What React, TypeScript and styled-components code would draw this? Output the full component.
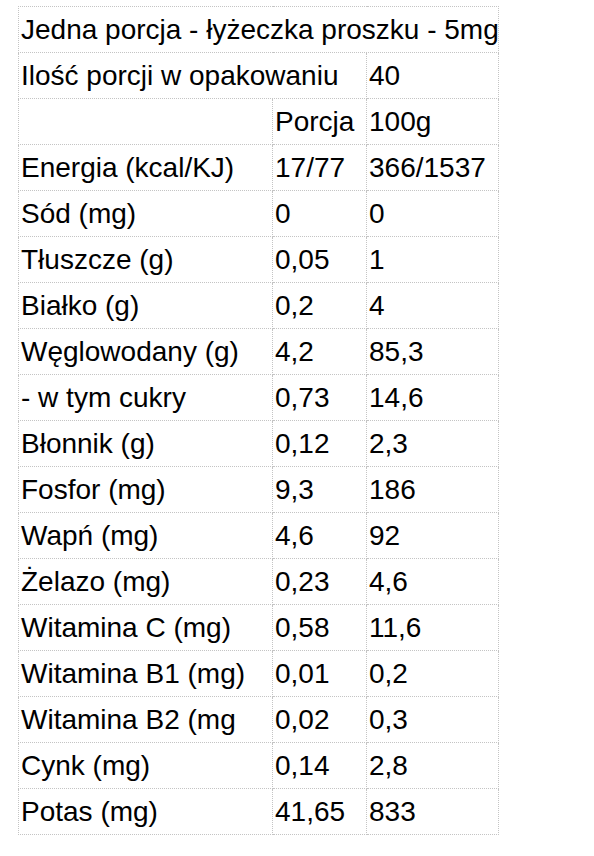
import styled, { createGlobalStyle } from "styled-components";

const Global = createGlobalStyle`
    body {
        margin: 0;
        background: #ffffff;
    }
`;

const Page = styled.div`
    padding: 6px 0 0 18px;
`;

const Table = styled.table`
    border-collapse: collapse;
    table-layout: fixed;
    width: 480px;
    font-family: "Liberation Sans", Arial, Helvetica, sans-serif;
    font-size: 28px;
    color: #000000;
`;

const Cell = styled.td`
    border: 1px dotted #c4c4c4;
    height: 45px;
    padding: 0 0 0 2px;
    white-space: nowrap;
    overflow: visible;
    vertical-align: middle;
`;

type Row = [string, string, string];

const rows: Row[] = [
    ["", "Porcja", "100g"],
    ["Energia (kcal/KJ)", "17/77", "366/1537"],
    ["Sód (mg)", "0", "0"],
    ["Tłuszcze (g)", "0,05", "1"],
    ["Białko (g)", "0,2", "4"],
    ["Węglowodany (g)", "4,2", "85,3"],
    ["- w tym cukry", "0,73", "14,6"],
    ["Błonnik (g)", "0,12", "2,3"],
    ["Fosfor (mg)", "9,3", "186"],
    ["Wapń (mg)", "4,6", "92"],
    ["Żelazo (mg)", "0,23", "4,6"],
    ["Witamina C (mg)", "0,58", "11,6"],
    ["Witamina B1 (mg)", "0,01", "0,2"],
    ["Witamina B2 (mg", "0,02", "0,3"],
    ["Cynk (mg)", "0,14", "2,8"],
    ["Potas (mg)", "41,65", "833"],
];

export default function App() {
    return (
        <>
            <Global />
            <Page>
                <Table>
                    <colgroup>
                        <col style={{ width: 254 }} />
                        <col style={{ width: 94 }} />
                        <col style={{ width: 132 }} />
                    </colgroup>
                    <tbody>
                        <tr>
                            <Cell colSpan={3}>Jedna porcja - łyżeczka proszku - 5mg</Cell>
                        </tr>
                        <tr>
                            <Cell colSpan={2}>Ilość porcji w opakowaniu</Cell>
                            <Cell>40</Cell>
                        </tr>
                        {rows.map((r, i) => (
                            <tr key={i}>
                                <Cell>{r[0]}</Cell>
                                <Cell>{r[1]}</Cell>
                                <Cell>{r[2]}</Cell>
                            </tr>
                        ))}
                    </tbody>
                </Table>
            </Page>
        </>
    );
}
